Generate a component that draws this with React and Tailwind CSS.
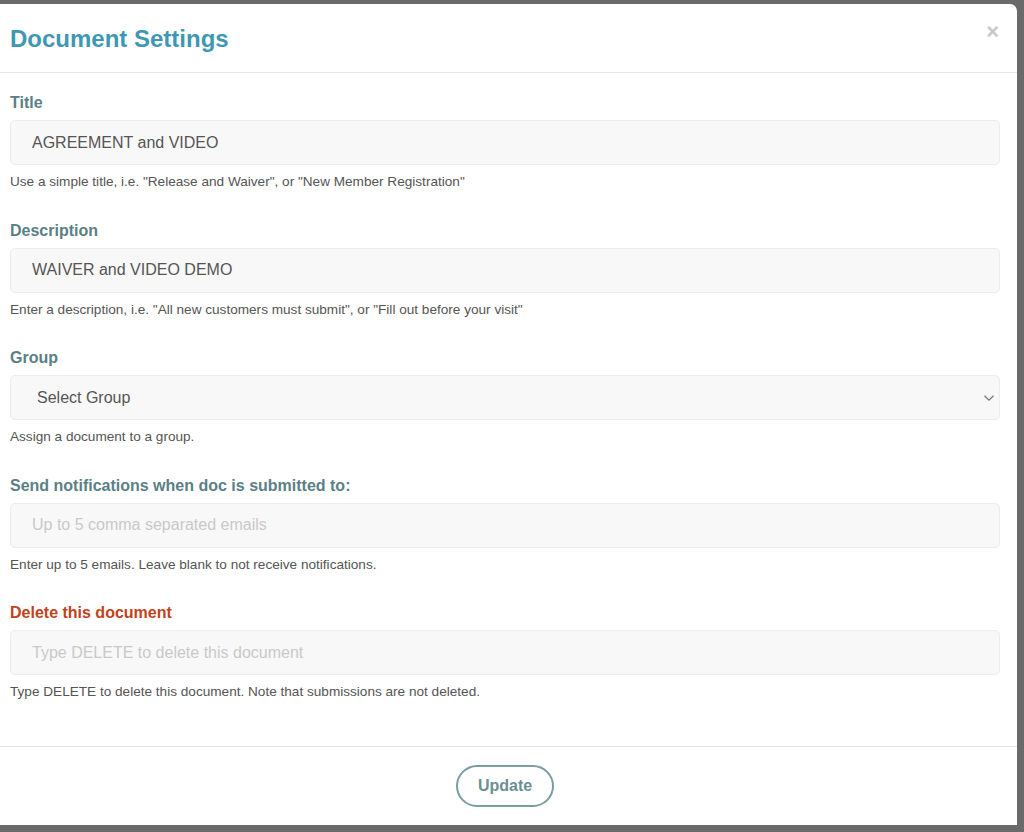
import React from 'react';

const fields = [
  {
    label: 'Title',
    value: 'AGREEMENT and VIDEO',
    help: 'Use a simple title, i.e. "Release and Waiver", or "New Member Registration"',
  },
  {
    label: 'Description',
    value: 'WAIVER and VIDEO DEMO',
    help: 'Enter a description, i.e. "All new customers must submit", or "Fill out before your visit"',
  },
  {
    label: 'Group',
    value: 'Select Group',
    select: true,
    help: 'Assign a document to a group.',
  },
  {
    label: 'Send notifications when doc is submitted to:',
    placeholder: 'Up to 5 comma separated emails',
    help: 'Enter up to 5 emails. Leave blank to not receive notifications.',
  },
  {
    label: 'Delete this document',
    placeholder: 'Type DELETE to delete this document',
    help: 'Type DELETE to delete this document. Note that submissions are not deleted.',
    danger: true,
  },
];

function Field({ field }) {
  return (
    <div className="mb-[29.5px]">
      <div className={`text-[16px] leading-[20px] font-bold ${field.danger ? 'text-[#c2421a]' : 'text-[#5b7f86]'}`}>
        {field.label}
      </div>
      <div className={`mt-[7px] h-[45px] flex items-center justify-between rounded-[5px] border border-[#ececec] bg-[#f8f8f8] pr-[4px] text-[16px] ${field.select ? 'pl-[26px]' : 'pl-[21px]'}`}>
        {field.value ? (
          <span className="text-[#555]">{field.value}</span>
        ) : (
          <span className="text-[#c9c9c9]">{field.placeholder}</span>
        )}
        {field.select && (
          <svg width="12" height="8" viewBox="0 0 12 8" fill="none" stroke="#777" strokeWidth="1.3">
            <path d="M1.5 1.8 L6 6.2 L10.5 1.8" />
          </svg>
        )}
      </div>
      <div className="mt-[8px] text-[13.6px] leading-[18px] text-[#555]">{field.help}</div>
    </div>
  );
}

export default function App() {
  return (
    <div className="w-[1024px] h-[832px] bg-[#6a6a6a] pt-[4px] overflow-hidden" style={{ fontFamily: '"Liberation Sans", Arial, sans-serif' }}>
      <div className="w-[1017px] h-[821px] bg-white rounded-tr-[7px] flex flex-col">
        <div className="h-[69px] flex items-center justify-between pl-[10px] pr-[18px] border-b border-[#e5e5e5]">
          <h1 className="text-[24px] font-bold text-[#3f98b3] pt-[1px]">Document Settings</h1>
          <span className="text-[22px] font-bold text-[#c8c8c8] leading-none -mt-[12px]">×</span>
        </div>
        <div className="pl-[10px] pr-[17px] pt-[20px] flex-1">
          {fields.map((f) => (
            <Field key={f.label} field={f} />
          ))}
        </div>
        <div className="h-[79px] border-t border-[#e5e5e5] flex items-start justify-center pt-[18px] pr-[7px]">
          <button className="w-[98px] h-[42px] rounded-full border-2 border-[#7a9d9f] text-[16px] font-bold text-[#6b8f94]">
            Update
          </button>
        </div>
      </div>
    </div>
  );
}
